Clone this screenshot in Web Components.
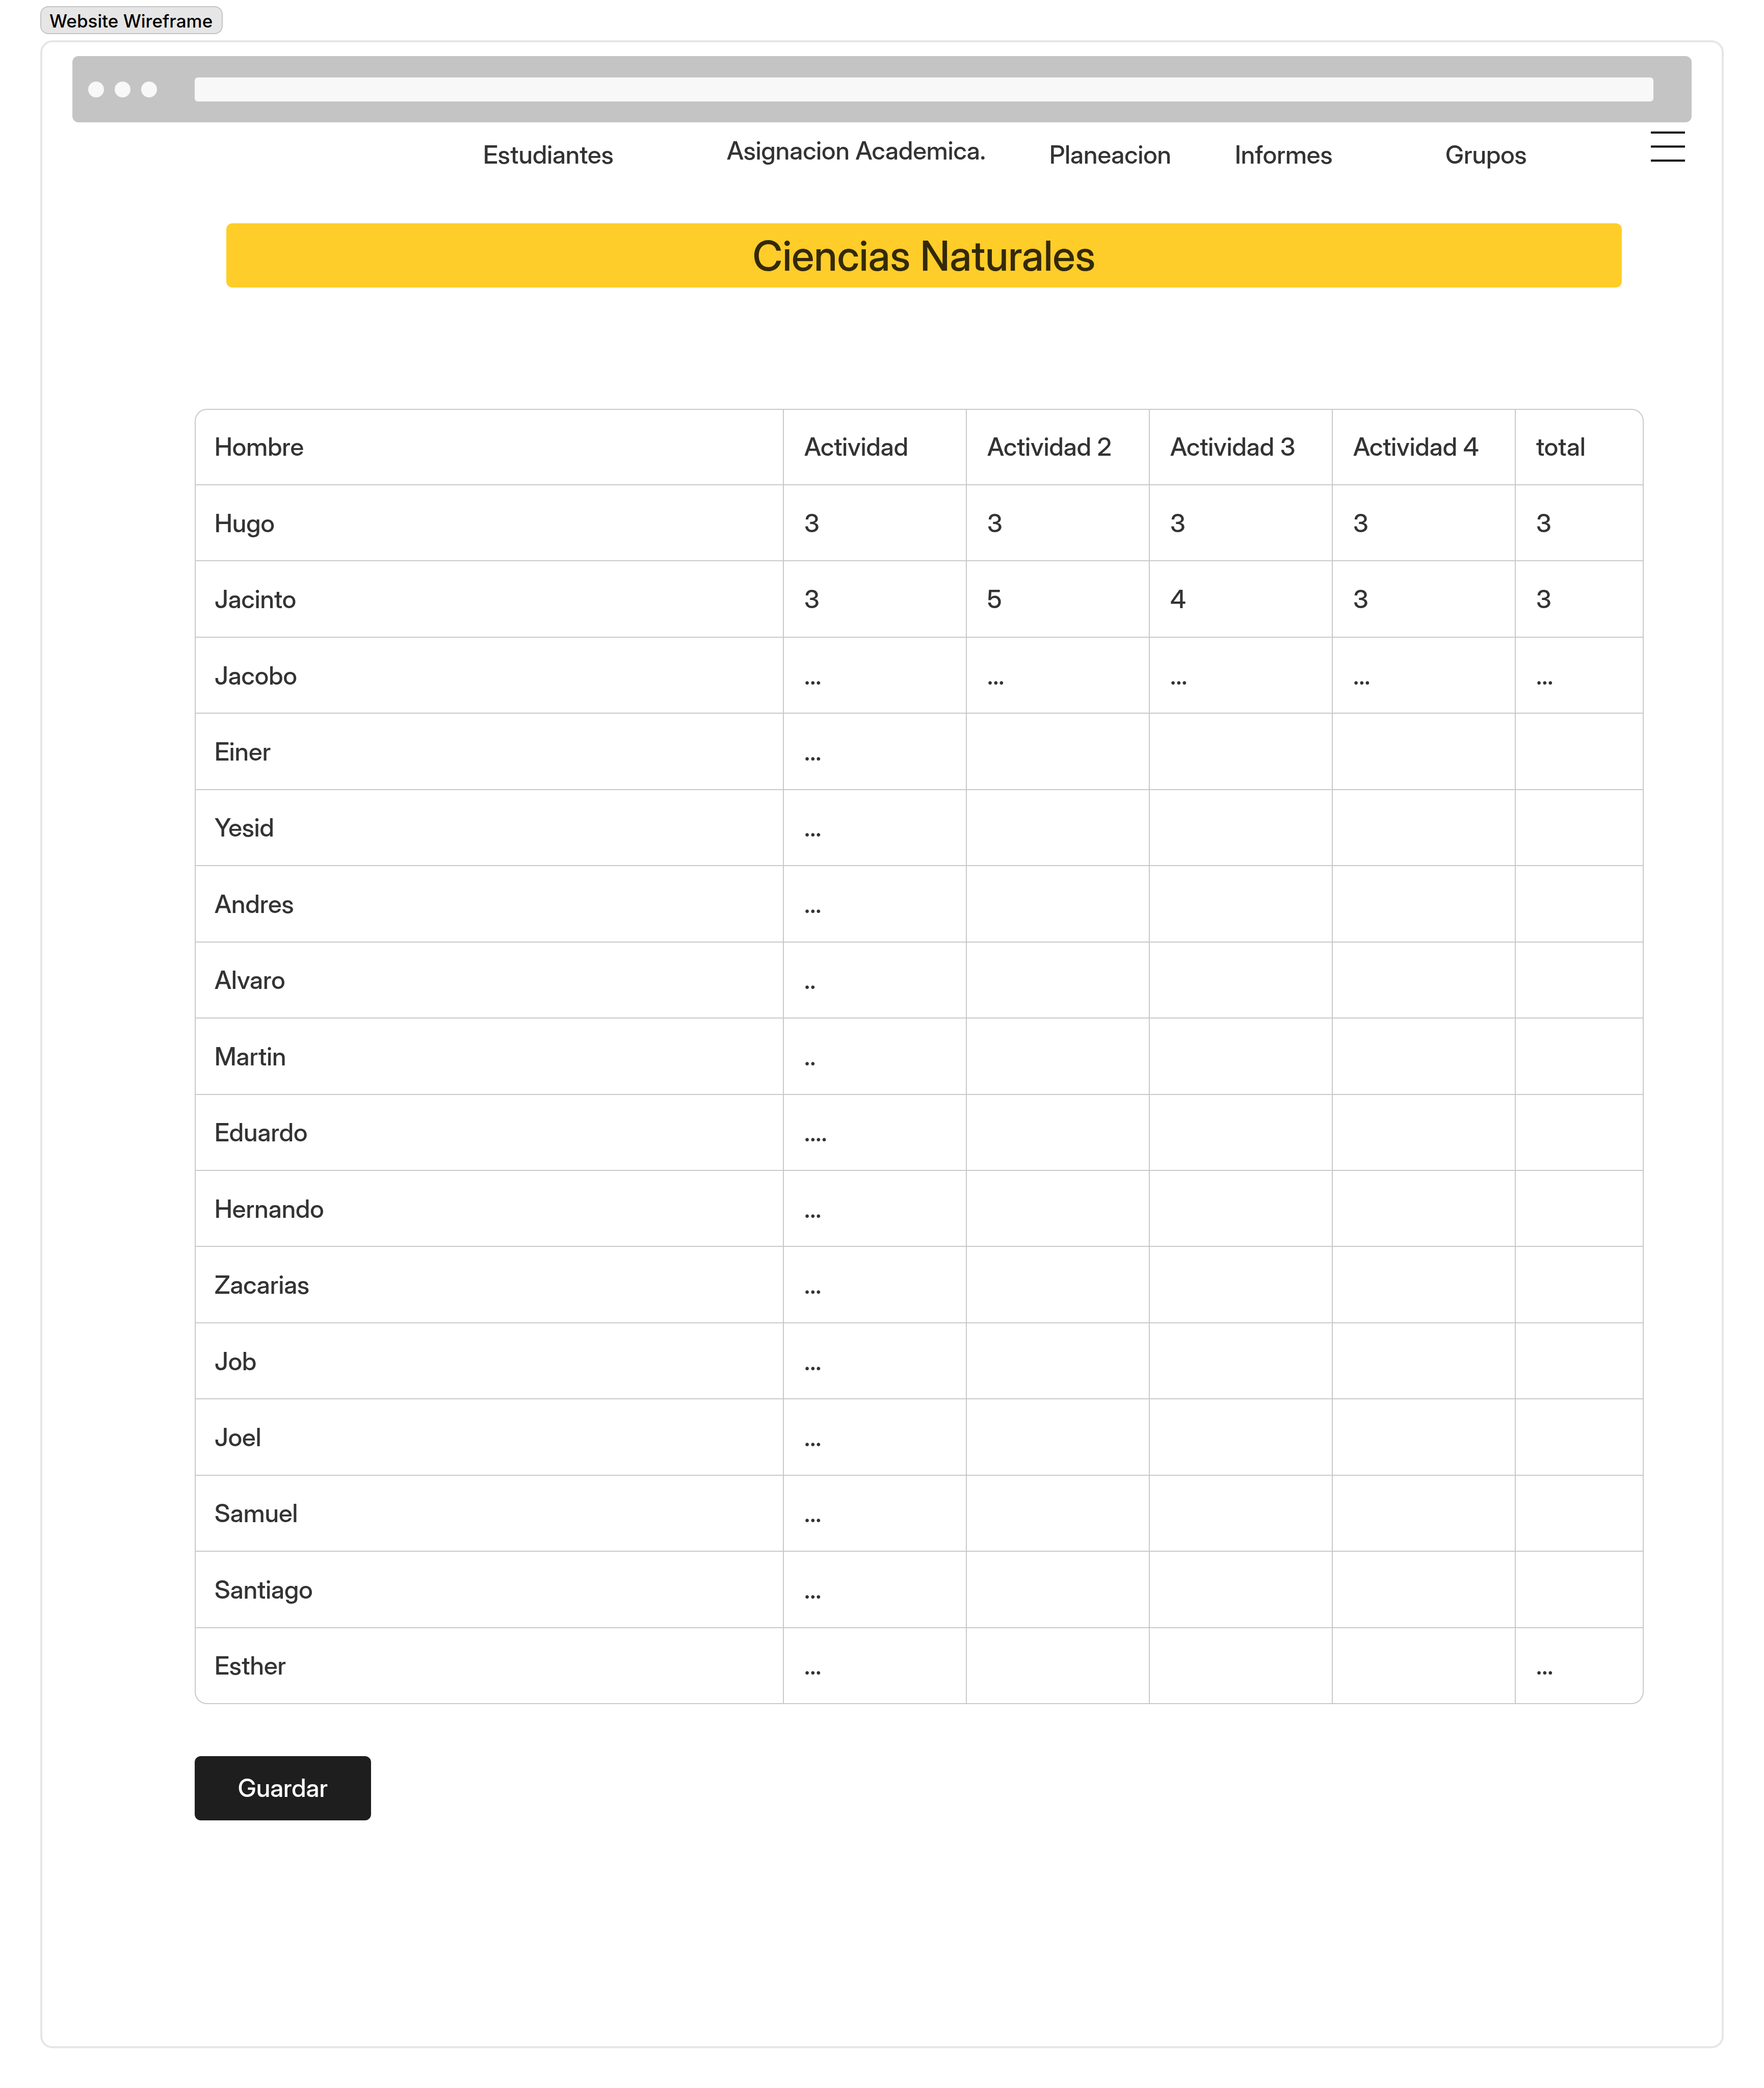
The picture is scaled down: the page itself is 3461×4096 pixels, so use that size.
<!DOCTYPE html>
<html lang="es">
<head>
<meta charset="utf-8">
<title>Website Wireframe</title>
<style>
  body { margin: 0; background: #fff; color: #333; font: 500 49px/76px "Inter Display", Inter, "Liberation Sans", sans-serif; }
</style>
</head>
<body>
<wireframe-page label="Website Wireframe">
  <browser-bar></browser-bar>
  <site-nav></site-nav>
  <course-title>Ciencias Naturales</course-title>
  <grade-table></grade-table>
  <save-button>Guardar</save-button>
</wireframe-page>

<script>
const define = (name, html, setup) => customElements.define(name, class extends HTMLElement {
  constructor() {
    super();
    this.attachShadow({ mode: 'open' }).innerHTML = html;
  }
  connectedCallback() { if (setup) setup(this, this.shadowRoot); }
});

define('wireframe-page', `
  <style>
    :host { display: flex; flex-direction: column; align-items: flex-start; gap: 12px; box-sizing: border-box; min-height: 100vh; padding: 12px 79px 78px; }
    .tag { box-sizing: border-box; padding: 4px 18px 0 16px; border: 2px solid #c4c4c4; border-radius: 16px; background: #e6e6e6; color: #000; font-family: Inter, "Liberation Sans", sans-serif; font-size: 35px; line-height: 47px; }
    main { flex: 1; align-self: stretch; display: flex; flex-direction: column; box-sizing: border-box; padding: 27px 59px; border: 4px solid #e6e6e6; border-radius: 24px; }
  </style>
  <div class="tag"></div>
  <main><slot></slot></main>
`, (el, root) => { root.querySelector('.tag').textContent = el.getAttribute('label'); });

define('browser-bar', `
  <style>
    :host { display: flex; align-items: center; gap: 21px; box-sizing: border-box; height: 130px; padding: 0 75px 0 31px; border-radius: 12px; background: #c4c4c4; }
    i { width: 31px; height: 31px; border-radius: 50%; background: #f8f8f8; }
    input { flex: 1; min-width: 0; height: 47px; margin: 0 0 0 53px; padding: 0 16px; box-sizing: border-box; border: 0; border-radius: 6px; background: #f8f8f8; font: inherit; font-size: 35px; }
  </style>
  <i></i><i></i><i></i>
  <input type="text" aria-label="URL">
`);

define('site-nav', `
  <style>
    :host { display: block; padding: 18px 13px 0 0; }
    nav { display: grid; grid-template-columns: 806fr 478fr 633fr 364fr 413fr 403fr 67px; height: 84px; align-items: end; }
    a { color: inherit; text-decoration: none; white-space: nowrap; justify-self: start; }
    a:first-child { grid-column: 2; }
    .high { align-self: start; }
    button { align-self: start; display: block; padding: 0; border: 0; background: none; }
    svg { display: block; width: 67px; height: 59px; }
  </style>
  <nav>
    <a href="#estudiantes">Estudiantes</a>
    <a class="high" href="#asignacion">Asignacion Academica.</a>
    <a href="#planeacion">Planeacion</a>
    <a href="#informes">Informes</a>
    <a href="#grupos">Grupos</a>
    <button type="button" aria-label="Menu">
      <svg viewBox="0 0 67 59"><path d="M0 2h67M0 29.5h67M0 57h67" stroke="#000" stroke-width="4"/></svg>
    </button>
  </nav>
`);

define('course-title', `
  <style>
    :host { display: block; margin: 96px 137px 0 302px; border-radius: 12px; background: #ffcd29; }
    h1 { margin: 0; padding-top: 2px; color: #33290a; text-align: center; font-size: 81px; line-height: 124px; font-weight: 500; }
  </style>
  <h1><slot></slot></h1>
`);

const columns = ['Hombre', 'Actividad', 'Actividad 2', 'Actividad 3', 'Actividad 4', 'total'];
const students = [
  ['Hugo', '3', '3', '3', '3', '3'],
  ['Jacinto', '3', '5', '4', '3', '3'],
  ['Jacobo', '...', '...', '...', '...', '...'],
  ['Einer', '...'],
  ['Yesid', '...'],
  ['Andres', '...'],
  ['Alvaro', '..'],
  ['Martin', '..'],
  ['Eduardo', '....'],
  ['Hernando', '...'],
  ['Zacarias', '...'],
  ['Job', '...'],
  ['Joel', '...'],
  ['Samuel', '...'],
  ['Santiago', '...'],
  ['Esther', '...', '', '', '', '...'],
];

define('grade-table', `
  <style>
    :host { display: block; margin: 238px 94px 0 240px; }
    table { width: 100%; height: 2541px; table-layout: fixed; border-collapse: separate; border-spacing: 0; border: 2px solid #c9c9c9; border-radius: 24px; }
    .activity { width: 359px; }
    .total { width: 251px; }
    thead tr { height: 146px; }
    th, td { padding: 0 0 0 40px; text-align: left; font-weight: inherit; white-space: nowrap; vertical-align: middle; }
    th:first-child { padding-left: 37px; }
    tbody th, tbody td { padding-top: 2px; border-top: 2px solid #c9c9c9; }
    th + th, th + td, td + td { border-left: 2px solid #c9c9c9; }
  </style>
  <table>
    <colgroup><col><col class="activity" span="4"><col class="total"></colgroup>
    <thead><tr></tr></thead>
    <tbody></tbody>
  </table>
`, (el, root) => {
  const cell = (tag, scope, text) => {
    const node = document.createElement(tag);
    if (scope) node.scope = scope;
    node.textContent = text;
    return node;
  };
  root.querySelector('thead tr').replaceChildren(...columns.map(name => cell('th', 'col', name)));
  root.querySelector('tbody').replaceChildren(...students.map(([name, ...marks]) => {
    const row = document.createElement('tr');
    row.append(cell('th', 'row', name));
    for (let i = 0; i < 5; i++) row.append(cell('td', '', marks[i] || ''));
    return row;
  }));
});

define('save-button', `
  <style>
    :host { display: flex; margin: 102px 0 0 240px; }
    button { width: 346px; height: 126px; padding: 0; border: 0; border-radius: 12px; background: #1e1e1e; color: #fff; font: inherit; }
  </style>
  <button type="button"><slot></slot></button>
`);
</script>
</body>
</html>
